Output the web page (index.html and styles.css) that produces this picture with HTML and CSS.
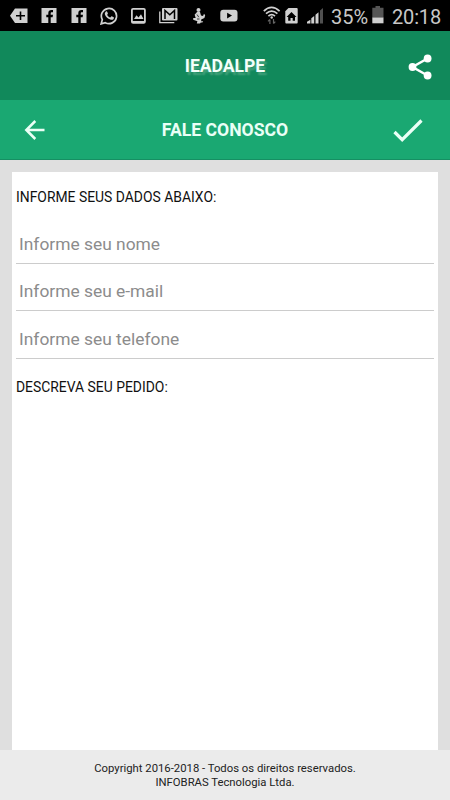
FILE: index.html
```html
<!DOCTYPE html>
<html lang="pt-BR">
<head>
<meta charset="utf-8">
<title>Fale Conosco</title>
<link rel="stylesheet" href="styles.css">
</head>
<body>
<div class="status">
  <svg class="i-tag" width="18" height="16" viewBox="0 0 18 16"><path fill="#d0d0d0" d="M5 .5h12.500v14.500H5L0 7.700z"/><path stroke="#000" stroke-width="1.600" d="M6 7.800h9M10.500 3.500v8.500"/></svg>
  <svg class="i-fb" width="16" height="16" viewBox="0 0 16 16"><path fill="#d0d0d0" d="M.5 0h15v15h-15z"/><path fill="#000" d="M7.300 15V9.200H5.300V6.800h2V5.200c0-2.200 1.200-3.300 3.200-3.300H12v2.300h-1.100c-.9 0-1.200.4-1.200 1.200v1.400H12l-.4 2.400H9.700V15z"/></svg>
  <svg class="i-fb2" width="16" height="16" viewBox="0 0 16 16"><path fill="#d0d0d0" d="M.5 0h15v15h-15z"/><path fill="#000" d="M7.300 15V9.200H5.300V6.800h2V5.200c0-2.200 1.200-3.300 3.200-3.300H12v2.300h-1.100c-.9 0-1.200.4-1.200 1.200v1.400H12l-.4 2.400H9.700V15z"/></svg>
  <svg class="i-wa" width="18" height="18" viewBox="0 0 18 18"><path fill="none" stroke="#d0d0d0" stroke-width="1.700" d="M1.100 16.900l1.200-4.200A7.600 7.600 0 1 1 5.300 15.700z"/><path fill="#d0d0d0" d="M5.700 4.700c.6-.6 1.200-.6 1.500.1l.7 1.600c.1.400-.5 1-.8 1.300.7 1.400 1.700 2.300 3.200 2.900l1-1.100c.3-.3.6-.2.9 0l1.500.8c.4.300.2 1.100-.1 1.600-.7.900-2 1.200-3.300.7-2.500-.8-4.200-2.500-5.200-4.600-.6-1.400-.2-2.500.6-3.300z"/></svg>
  <svg class="i-img" width="15" height="16" viewBox="0 0 15 16"><rect x=".9" y=".9" width="13" height="14" rx="1.200" fill="none" stroke="#d0d0d0" stroke-width="1.800"/><path fill="#d0d0d0" d="M1 13h13v2H1zM3 11l2.500-3.700 2 2.300L10 6.300l2.500 4.700z"/></svg>
  <svg class="i-mail" width="19" height="16" viewBox="0 0 19 16"><path fill="none" stroke="#d0d0d0" stroke-width="1.300" d="M.8 3.500v11.200h14.500"/><rect x="3" y="0" width="15.500" height="12.500" rx="1" fill="#d0d0d0"/><path fill="none" stroke="#000" stroke-width="1.500" d="M6 11V2.500l4.800 4.300 4.700-4.300V11"/></svg>
  <svg class="i-fig" width="14" height="16" viewBox="0 0 14 16"><circle cx="6.500" cy="2" r="2" fill="#d0d0d0"/><path fill="#d0d0d0" d="M5 4h3l1 3.500 2 .5 1-2.300 1.200 1.500-.8 2.800-3.200 1.600v1.600h2l-.8 1.200H8.800L8 15.500H4.800l.6-2.200-4.200-1.500V10h2.500L3 8l-.3-1.500L4 5.200z"/><path stroke="#000" stroke-width=".7" d="M5 6.500l1.800 2.700M5 11h2.500"/></svg>
  <svg class="i-yt" width="18" height="14" viewBox="0 0 18 14"><rect x=".3" y=".7" width="17.200" height="11.800" rx="3" fill="#d0d0d0"/><path fill="#000" d="M7.100 3.800v5.600l4.900-2.800z"/></svg>
  <svg class="i-wifi" width="18" height="19" viewBox="0 0 18 19"><g fill="none" stroke="#d0d0d0" stroke-width="1.700"><path d="M.8 5.200q7.700-7.500 15.800 0M3 7.700q5.700-5.200 11.400 0M5.400 10.200q3.300-3 6.600 0"/></g><circle cx="8.700" cy="11.500" r="1.200" fill="#d0d0d0"/><path fill="none" stroke="#666" stroke-width="1.200" d="M6.900 18v-4.500M5 15.300l1.900-1.900M10.500 13v4.600M12.300 15.700l-1.800 2"/></svg>
  <svg class="i-sim" width="13" height="16" viewBox="0 0 13 16"><path fill="#d0d0d0" d="M3.500 0h8c.8 0 1.200.4 1.200 1.200v13c0 .8-.4 1.300-1.200 1.300h-10C.7 15.500.3 15 .3 14.200V3.300z"/><path fill="#000" d="M6.500 4l5 5H10v3.800H7.700V10H5.500v2.800H3.200V9H1.600z"/></svg>
  <svg class="i-sig" width="17" height="16" viewBox="0 0 17 16"><path fill="#d0d0d0" d="M0 15.500v-1.800l3.400-2v3.800zM4.300 15.500v-5.200L7.200 8v7.500zM8.500 15.500V6.800l3-2.600v11.300z"/><path fill="#505050" d="M13 15.500V2.600L16 0v15.500z"/></svg>
  <span class="pct">35%</span>
  <svg class="i-bat" width="12" height="18" viewBox="0 0 12 18"><path fill="#555" d="M3.500 0h4.500v1.700h3.500v10H.3v-10h3.200z"/><path fill="#d0d0d0" d="M.3 11.500h11.200v5.800H.3z"/></svg>
  <span class="clock">20:18</span>
</div>
<header class="brand">
  <h1>IEADALPE</h1>
  <svg class="share" width="26" height="28" viewBox="0 0 26 28"><path fill="none" stroke="#fff" stroke-width="2.500" d="M20.500 5.500L5.500 14l15 8.500"/><g fill="#fff"><circle cx="20.600" cy="5.500" r="3.900"/><circle cx="5.500" cy="14" r="3.900"/><circle cx="20.600" cy="22.500" r="3.900"/></g></svg>
</header>
<nav class="bar">
  <svg class="back" width="22" height="22" viewBox="0 0 22 22"><path fill="none" stroke="#eafff6" stroke-width="2.500" d="M20.500 11H3M11.300 2L2.300 11l9 9"/></svg>
  <h2>FALE CONOSCO</h2>
  <svg class="check" width="32" height="26" viewBox="0 0 32 26"><path fill="none" stroke="#eafff6" stroke-width="3.200" d="M2.500 14l7.700 7.700L29.500 2.500"/></svg>
</nav>
<main>
  <form class="card">
    <p class="label">INFORME SEUS DADOS ABAIXO:</p>
    <input type="text" placeholder="Informe seu nome">
    <input type="email" placeholder="Informe seu e-mail">
    <input type="tel" placeholder="Informe seu telefone">
    <p class="label second">DESCREVA SEU PEDIDO:</p>
  </form>
</main>
<footer>Copyright 2016-2018 - Todos os direitos reservados.<br>INFOBRAS Tecnologia Ltda.</footer>
</body>
</html>
```
FILE: styles.css
```css
* { box-sizing: border-box; }
body {
  margin: 0;
  width: 450px;
  height: 800px;
  display: flex;
  flex-direction: column;
  overflow: hidden;
  background: #dfdfdf;
  color: #111;
  font-family: Roboto, "Liberation Sans", sans-serif;
}
h1, h2, p { margin: 0; }
svg { display: block; flex: none; }

.status {
  height: 31px;
  flex: none;
  display: flex;
  align-items: flex-start;
  padding: 8px 0 0 10px;
  background: #000;
  color: #c8c8c8;
  font-size: 20px;
  line-height: 20px;
  white-space: nowrap;
}
.i-fb { margin-left: 13px; }
.i-fb2 { margin-left: 14px; }
.i-wa { margin: -1px 0 0 13px; }
.i-img { margin-left: 13px; }
.i-mail { margin-left: 13px; }
.i-fig { margin-left: 14px; }
.i-yt { margin: 1px 0 0 14px; }
.i-wifi { margin: -2px 0 0 25px; }
.i-sim { margin-left: 4px; }
.i-sig { margin-left: 9px; }
.pct { width: 41px; margin: -1px 0 0 7px; }
.i-bat { margin-top: -2px; }
.clock { margin: -1px 0 0 8px; letter-spacing: -.15px; }

.brand, .bar {
  flex: none;
  display: grid;
  grid-template-columns: 60px 1fr 60px;
  align-items: center;
  text-align: center;
}
.brand {
  height: 69px;
  background: #11895b;
}
.brand h1 {
  grid-column: 2;
  font-size: 17.500px;
  font-weight: 700;
  line-height: 20px;
  color: #f4fffa;
  text-shadow: 2px 3px 2px rgba(150, 200, 175, .4);
}
.share { margin: 2px 0 0 17px; }
.bar {
  height: 60px;
  background: #1aa872;
  border-bottom: 1px solid #168f63;
}
.back { margin: 1px 0 0 24px; }
.bar h2 {
  font-size: 17.600px;
  font-weight: 700;
  line-height: 20px;
  color: #eafff6;
}
.check { margin: 2px 0 0 2px; }

main {
  flex: 1;
  display: flex;
  padding: 12px 12px 0;
}
.card {
  flex: 1;
  display: flex;
  flex-direction: column;
  padding: 17px 4px 0;
  background: #fff;
}
.label {
  font-size: 13.900px;
  line-height: 17px;
  margin-bottom: 10px;
}
.second { margin-top: 20px; }
input {
  flex: none;
  height: 47.500px;
  width: 100%;
  padding: 9px 3px 0;
  border: 0;
  border-bottom: 1px solid #ccc;
  border-radius: 0;
  background: transparent;
  outline: 0;
  font: 17.400px Roboto, "Liberation Sans", sans-serif;
}
input::placeholder { color: #8c8c8c; opacity: 1; }

footer {
  height: 50px;
  flex: none;
  padding-top: 12px;
  background: #ebebeb;
  color: #222;
  font-size: 11.300px;
  line-height: 13.500px;
  text-align: center;
}
```
